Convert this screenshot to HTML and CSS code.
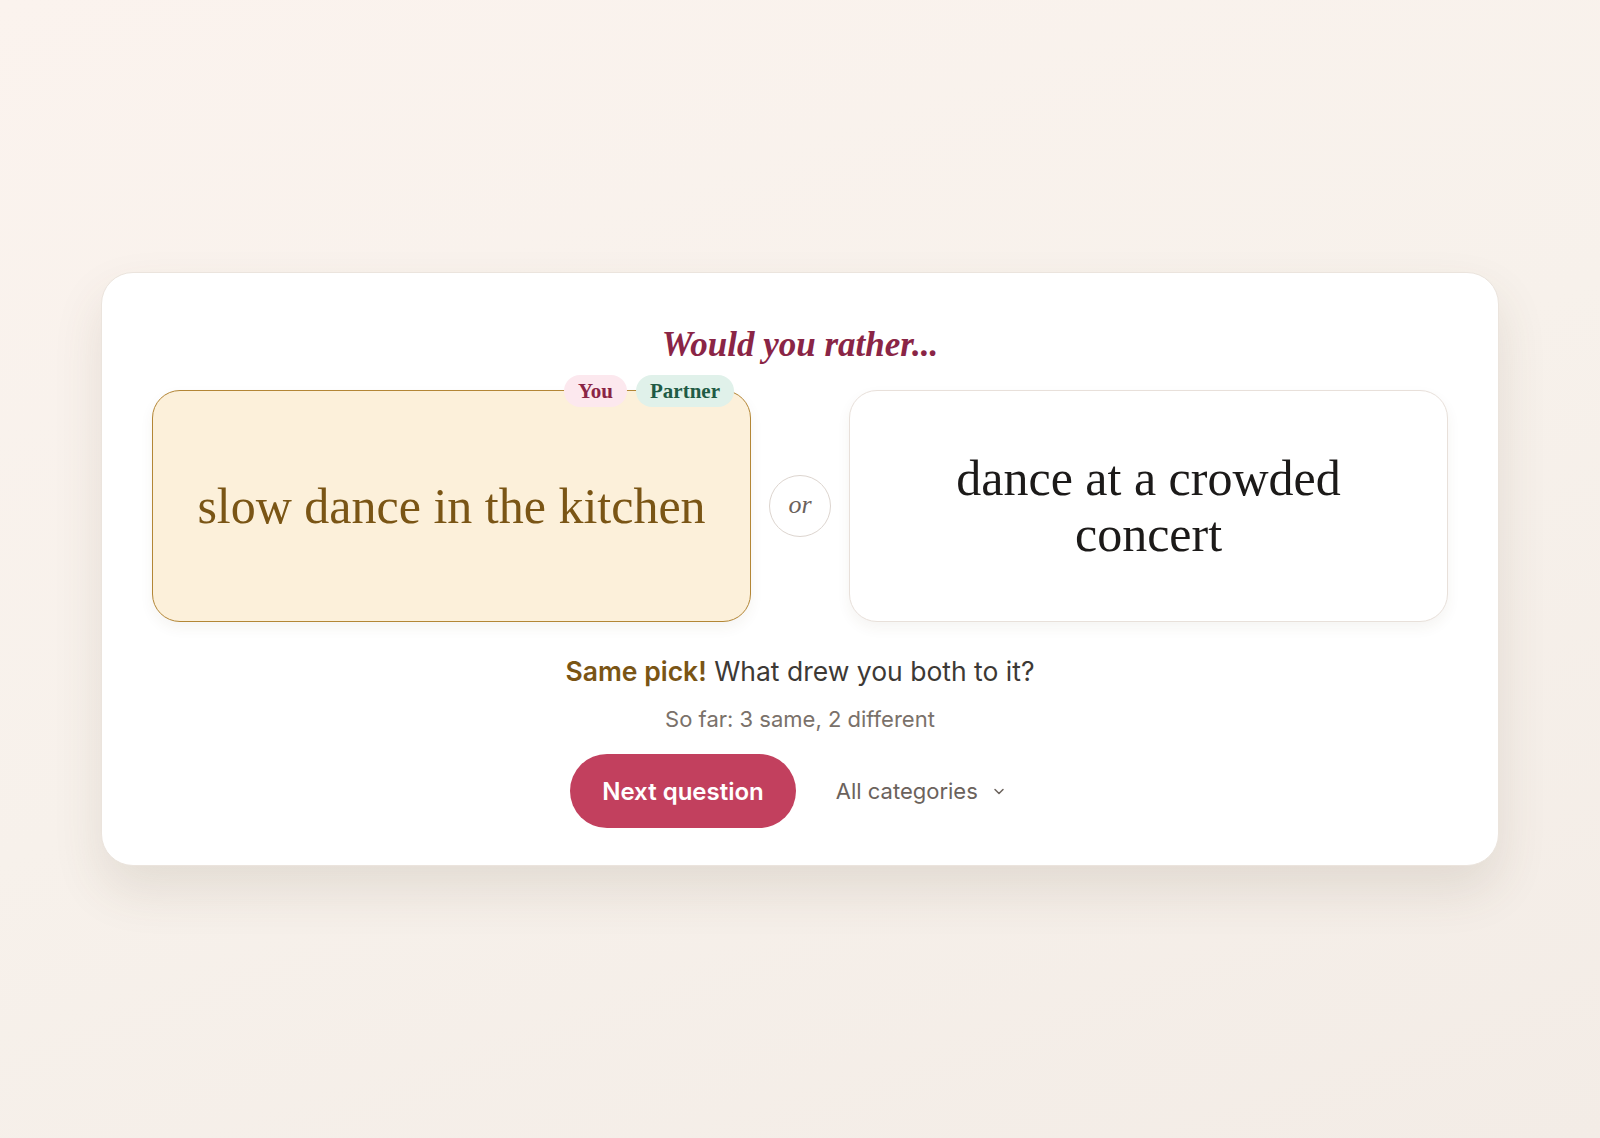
FILE: index.html
```html
<!DOCTYPE html>
<html>
<head>
    <title>Would you rather</title>
    <link rel="stylesheet" href="styles.css">
</head>
<body>
    <main class="game">
        <h1 class="prompt">Would you rather...</h1>

        <div class="choices">
            <div class="choice picked">
                <div class="tags">
                    <span class="tag you">You</span>
                    <span class="tag partner">Partner</span>
                </div>
                <p>slow dance in the kitchen</p>
            </div>
            <div class="or">or</div>
            <div class="choice">
                <p>dance at a crowded concert</p>
            </div>
        </div>

        <p class="verdict"><strong>Same pick!</strong> What drew you both to it?</p>
        <p class="tally">So far: 3 same, 2 different</p>

        <div class="actions">
            <button class="next">Next question</button>
            <button class="category">
                All categories
                <svg width="14" height="14" viewBox="0 0 14 14" fill="none">
                    <path d="M3 5.5l4 4 4-4" stroke="#6b625c" stroke-width="1.5" stroke-linecap="round" stroke-linejoin="round"/>
                </svg>
            </button>
        </div>
    </main>
</body>
</html>
```

FILE: styles.css
```css
body {
    margin: 0;
    min-height: 100vh;
    font-family: 'Inter', 'Noto Sans', sans-serif;
    background: linear-gradient(160deg, #fbf3ee 0%, #f7f1eb 50%, #f3ece6 100%);
    display: flex;
    align-items: center;
    justify-content: center;
}

.game {
    width: 1398px;
    box-sizing: border-box;
    background: #fff;
    border: 1px solid #ebe4dd;
    border-radius: 32px;
    box-shadow: 0 24px 50px rgba(90, 70, 50, 0.12);
    padding: 53px 50px 37px;
    display: flex;
    flex-direction: column;
    align-items: center;
}

.prompt {
    margin: 0;
    font-family: 'Liberation Serif', serif;
    font-style: italic;
    font-weight: bold;
    font-size: 35px;
    line-height: 38px;
    color: #8a2546;
}

.choices {
    margin-top: 26px;
    width: 100%;
    display: flex;
    align-items: center;
    gap: 18px;
}

.choice {
    position: relative;
    flex: 1;
    height: 232px;
    box-sizing: border-box;
    padding: 0 40px;
    border: 1px solid #e8e0da;
    border-radius: 28px;
    background: #fff;
    box-shadow: 0 6px 14px rgba(80, 60, 40, 0.06);
    display: flex;
    align-items: center;
    justify-content: center;
    text-align: center;
}

.choice p {
    margin: 0;
    font-family: 'Liberation Serif', serif;
    font-size: 50px;
    line-height: 56px;
    color: #1c1a19;
}

.choice.picked {
    background: #fcf0da;
    border: 1.5px solid #b38636;
}

.choice.picked p {
    color: #7a5515;
}

.tags {
    position: absolute;
    top: -16px;
    right: 16px;
    display: flex;
    gap: 9px;
}

.tag {
    height: 32px;
    line-height: 32px;
    padding: 0 14px;
    border-radius: 16px;
    font-family: 'Liberation Serif', serif;
    font-weight: bold;
    font-size: 21px;
}

.tag.you {
    background: #fce8ee;
    color: #8a2546;
}

.tag.partner {
    background: #e0f1ea;
    color: #1f5b45;
}

.or {
    width: 62px;
    height: 62px;
    flex-shrink: 0;
    box-sizing: border-box;
    border: 1.5px solid #ddd5cf;
    border-radius: 50%;
    display: flex;
    align-items: center;
    justify-content: center;
    font-family: 'Liberation Serif', serif;
    font-style: italic;
    font-size: 26px;
    color: #6b625c;
    padding-bottom: 3px;
}

.verdict {
    margin: 32px 0 0;
    font-size: 26.5px;
    line-height: 34px;
    color: #3d3935;
}

.verdict strong {
    font-weight: 600;
    color: #7a5515;
}

.tally {
    margin: 17px 0 0;
    font-size: 22px;
    line-height: 28px;
    color: #7a716a;
}

.actions {
    margin-top: 21px;
    display: flex;
    align-items: center;
    gap: 24px;
}

.next {
    height: 74px;
    padding: 0 32px;
    border: none;
    border-radius: 37px;
    background: #c2405e;
    color: #fff;
    font-family: 'Inter', sans-serif;
    font-weight: 600;
    font-size: 24px;
    cursor: pointer;
}

.category {
    background: none;
    border: none;
    padding: 8px 24px 8px 16px;
    display: flex;
    align-items: center;
    gap: 14px;
    font-family: 'Inter', sans-serif;
    font-size: 22px;
    color: #6b625c;
    cursor: pointer;
}
```
